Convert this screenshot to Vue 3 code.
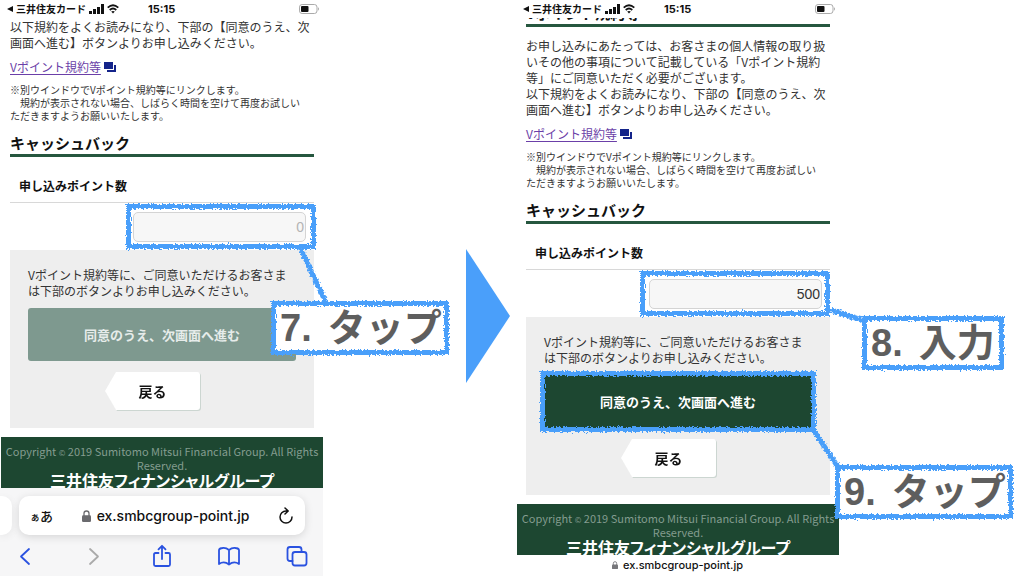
<script setup>
import { ref } from 'vue'

const screens = ref([
  { id: 'before', scrolled: false, points: '', ready: false, toolbar: true },
  { id: 'after', scrolled: true, points: '500', ready: true, toolbar: false }
])
</script>

<template>
  <main class="board">
    <svg class="defs" aria-hidden="true">
      <filter id="crayon" x="-5%" y="-15%" width="110%" height="130%">
        <feTurbulence type="fractalNoise" baseFrequency="0.55" numOctaves="2" seed="4" result="noise" />
        <feDisplacementMap in="SourceGraphic" in2="noise" scale="5" xChannelSelector="R" yChannelSelector="G" />
      </filter>
    </svg>

    <template v-for="(screen, index) in screens" :key="screen.id">
      <svg v-if="index > 0" class="next" viewBox="0 0 44 134" aria-hidden="true">
        <path d="M0 0L44 67L0 134Z" fill="#4a9ffa" />
      </svg>

      <section class="phone">
        <header class="status">
          <svg class="caret" viewBox="0 0 6 8"><path d="M6 1V7L0 4Z" fill="#111" /></svg>
          <span class="carrier">三井住友カード</span>
          <svg class="signal" viewBox="0 0 15 10">
            <path d="M0 7h3v3H0zM4 5h3v5H4zM8 3h3v7H8zM12 0h3v10h-3z" fill="#111" />
          </svg>
          <svg class="wifi" viewBox="0 0 12 10" fill="none" stroke="#111">
            <path d="M.7 3.7Q6-1.2 11.3 3.7M2.7 6Q6 3 9.3 6" stroke-width="1.7" />
            <path d="M4.2 7.6Q6 6.2 7.8 7.6L6 9.6Z" fill="#111" stroke="none" />
          </svg>
          <span class="clock">15:15</span>
          <svg class="battery" viewBox="0 0 21 10">
            <rect x=".5" y=".5" width="17.5" height="9" rx="2.6" fill="#fff" stroke="#aaa" />
            <rect x="2" y="2" width="7.5" height="6" rx="1" fill="#111" />
            <path d="M19 3.3Q21 5 19 6.7Z" fill="#aaa" />
          </svg>
        </header>

        <div class="page">
          <template v-if="screen.scrolled">
            <h2 class="heading tucked">Vポイント規約等</h2>
            <p class="text intro">
              お申し込みにあたっては、お客さまの個人情報の取り扱<br />いその他の事項について記載している「Vポイント規約<br />等」にご同意いただく必要がございます。
            </p>
          </template>
          <p class="text">
            以下規約をよくお読みになり、下部の【同意のうえ、次<br />画面へ進む】ボタンよりお申し込みください。
          </p>
          <p class="terms">
            <a href="#terms">Vポイント規約等</a>
            <svg viewBox="0 0 12 10"><path d="M0 0h9v7H0zM10 3h2v7H3V8h7z" fill="#14248a" /></svg>
          </p>
          <p class="notes">
            ※別ウインドウでVポイント規約等にリンクします。<br />　規約が表示されない場合、しばらく時間を空けて再度お試しい<br />ただきますようお願いいたします。
          </p>
          <h2 class="heading">キャッシュバック</h2>
          <label class="field-name" :for="'points-' + screen.id">申し込みポイント数</label>
          <div class="target field">
            <input :id="'points-' + screen.id" v-model="screen.points" type="text" inputmode="numeric" placeholder="0" />
            <template v-if="!screen.ready">
              <span class="frame"></span>
              <svg class="link link-tap" viewBox="0 0 40 64" aria-hidden="true"><path d="M7 4L33 60" /></svg>
              <strong class="callout callout-tap"><span>7.</span><span>タップ</span></strong>
            </template>
            <template v-else>
              <span class="frame frame-entered"></span>
              <svg class="link link-enter" viewBox="0 0 48 24" aria-hidden="true"><path d="M4 5L44 18" /></svg>
              <strong class="callout callout-enter"><span>8.</span><span>入力</span></strong>
            </template>
          </div>

          <div class="panel">
            <p class="text">
              Vポイント規約等に、ご同意いただけるお客さま<br />は下部のボタンよりお申し込みください。
            </p>
            <div class="target">
              <button class="agree" type="button" :disabled="!screen.ready">同意のうえ、次画面へ進む</button>
              <template v-if="screen.ready">
                <span class="frame frame-button"></span>
                <svg class="link link-agree" viewBox="0 0 36 48" aria-hidden="true"><path d="M6 6L30 42" /></svg>
                <strong class="callout callout-agree"><span>9.</span><span>タップ</span></strong>
              </template>
            </div>
            <button class="back" type="button"><span>戻る</span></button>
          </div>
        </div>

        <footer class="copyright">
          <small>Copyright <i>©</i> 2019 Sumitomo Mitsui Financial Group. All Rights<br />Reserved.</small>
          <b>三井住友フィナンシャルグループ</b>
        </footer>

        <div v-if="screen.toolbar" class="browser">
          <div class="tabs">
            <span class="stub"></span>
            <div class="address">
              <button class="reader" type="button"><small>ぁ</small>あ</button>
              <span class="url">
                <svg viewBox="0 0 9 12"><path d="M2 6V3.5a2.5 2.5 0 0 1 5 0V6" fill="none" stroke="#6a6a6e" stroke-width="1.3" /><rect y="5.2" width="9" height="6.8" rx="1.3" fill="#6a6a6e" /></svg>
                ex.smbcgroup-point.jp
              </span>
              <button class="reload" type="button" aria-label="再読み込み">
                <svg viewBox="0 0 16 18" fill="none" stroke="#111" stroke-width="1.5" stroke-linecap="round" stroke-linejoin="round">
                  <path d="M9.5 4H8a6 6 0 1 0 6 6M7 1L10.2 4L7 7" />
                </svg>
              </button>
            </div>
          </div>
          <nav class="tools">
            <button type="button" aria-label="戻る"><svg viewBox="0 0 22 24"><path d="M14 5L6 12.5L14 20" /></svg></button>
            <button type="button" aria-label="進む" disabled><svg viewBox="0 0 22 24"><path d="M7 5L15 12.5L7 20" /></svg></button>
            <button type="button" aria-label="共有"><svg viewBox="0 0 22 24"><path d="M7.5 9H4.5Q3 9 3 10.5V20.5Q3 22 4.5 22H17.5Q19 22 19 20.5V10.5Q19 9 17.5 9H14.5M11 15V2M7.5 5.3L11 1.8L14.5 5.3" /></svg></button>
            <button type="button" aria-label="ブックマーク"><svg viewBox="0 0 22 24"><path d="M11 6Q8 3.5 4.5 4Q1.5 4.3 1 6V20Q6 16.5 11 20.5Q16 16.5 21 20V6Q20.5 4.3 17.5 4Q14 3.5 11 6V20.5" /></svg></button>
            <button type="button" aria-label="タブ"><svg viewBox="0 0 22 24"><rect x="6.5" y="8" width="14" height="13.5" rx="2.5" /><path d="M6.5 17H4Q1.5 17 1.5 14.5V5.5Q1.5 3 4 3H13Q15.5 3 15.5 5.5V8" /></svg></button>
          </nav>
        </div>
        <p v-else class="mini-url">
          <svg viewBox="0 0 9 12"><path d="M2 6V3.5a2.5 2.5 0 0 1 5 0V6" fill="none" stroke="#77777b" stroke-width="1.3" /><rect y="5.2" width="9" height="6.8" rx="1.3" fill="#77777b" /></svg>
          ex.smbcgroup-point.jp
        </p>
      </section>
    </template>
  </main>
</template>

<style>
body {
  margin: 0;
  background: #fff;
}
</style>

<style scoped>
.board {
  display: grid;
  grid-template-columns: 323fr 193fr 323fr 185fr;
  align-items: start;
  min-height: 100vh;
  overflow: hidden;
  color: #333;
  font-family: "Noto Sans CJK JP", sans-serif;
}
.defs {
  position: absolute;
  width: 0;
  height: 0;
}
p,
h2 {
  margin: 0;
}
button {
  padding: 0;
  border: 0;
  background: none;
  color: inherit;
  font-family: inherit;
}
svg {
  display: block;
  flex: none;
}
.next {
  width: 44px;
  height: 134px;
  justify-self: end;
  margin: 249px 6px 0 0;
}
.phone {
  display: flex;
  flex-direction: column;
  min-width: 0;
}

/* status bar */
.status {
  position: relative;
  z-index: 2;
  display: grid;
  grid-template-columns: 6px auto 15px 12px 1fr 21px;
  align-items: center;
  column-gap: 3px;
  height: 18px;
  padding: 0 3px 0 7px;
  background: #fff;
  color: #111;
  font-size: 10px;
  font-weight: 700;
  line-height: 18px;
  white-space: nowrap;
}
.caret { width: 6px; height: 8px; }
.signal { width: 15px; height: 10px; }
.wifi { width: 12px; height: 10px; }
.clock {
  padding-left: 26px;
  font-family: Inter, sans-serif;
  font-size: 11px;
}
.battery { width: 21px; height: 10px; }

/* page */
.page {
  padding: 1px 9px 9px 10px;
}
.text {
  font-size: 12px;
  line-height: 16px;
  white-space: nowrap;
}
.terms {
  display: flex;
  align-items: center;
  gap: 3px;
  margin-top: 8px;
  font-size: 12px;
  line-height: 16px;
}
.terms a {
  color: #6b3fa8;
  text-decoration: underline;
  text-underline-offset: 2px;
}
.terms svg { width: 12px; height: 10px; }
.notes {
  margin-top: 8px;
  font-size: 10px;
  line-height: 13px;
  white-space: nowrap;
}
.heading {
  margin-top: 11px;
  padding-bottom: 1px;
  border-bottom: 3px solid #26573f;
  color: #111;
  font-size: 15px;
  font-weight: 700;
  line-height: 20px;
}
.tucked {
  margin-top: -16px;
}
.intro {
  margin-top: 11px;
}
.field-name {
  display: block;
  padding: 21px 9px 8px;
  border-bottom: 1px solid #d8d8d8;
  color: #111;
  font-size: 12px;
  font-weight: 700;
  line-height: 16px;
}
.target {
  position: relative;
}
.field {
  width: 57%;
  margin: 9px 8px 8px auto;
}
.field input {
  display: block;
  box-sizing: border-box;
  width: 100%;
  height: 30px;
  padding: 0 1px;
  border: 1px solid #d4d4d4;
  border-radius: 5px;
  background: #f7f7f7;
  color: #333;
  font-family: "Liberation Sans", sans-serif;
  font-size: 14px;
  text-align: right;
}
.field input::placeholder {
  color: #b4b4b4;
}
.panel {
  padding: 17px 18px 18px;
  background: #eee;
}
.agree {
  display: block;
  width: 100%;
  height: 53px;
  margin-top: 9px;
  border-radius: 3px;
  background: #1d4731;
  color: #fff;
  font-size: 13px;
  font-weight: 700;
}
.agree:disabled {
  background: #7e998f;
  color: #e6ecea;
}
.back {
  display: block;
  width: 95px;
  height: 38px;
  margin: 11px auto 0 77px;
  color: #111;
  font-size: 14px;
  font-weight: 700;
  filter: drop-shadow(1px 1px 0 #ccd6d1);
}
.back span {
  display: block;
  border-radius: 3px;
  background: #fff;
  clip-path: polygon(11px 0, 100% 0, 100% 100%, 11px 100%, 0 50%);
  line-height: 38px;
}
.copyright {
  display: flex;
  flex-direction: column;
  align-items: center;
  padding-top: 8px;
  margin-left: 1px;
  background: #1d4731;
  text-align: center;
  white-space: nowrap;
}
.copyright small {
  color: #839c8f;
  font-size: 11px;
  line-height: 13px;
}
.copyright i {
  font-size: 8px;
  font-style: normal;
}
.copyright b {
  color: #fff;
  font-size: 16px;
  line-height: 16px;
  font-feature-settings: "palt";
}

/* annotations */
.frame {
  position: absolute;
  z-index: 3;
  inset: -8px -10px -7px -7px;
  border: 5px solid #4a9ffa;
  filter: url(#crayon);
  pointer-events: none;
}
.frame-entered {
  inset: -8px -8px -7px -9px;
}
.frame-button {
  inset: -4px;
}
.callout {
  position: absolute;
  z-index: 5;
  box-sizing: border-box;
  display: flex;
  gap: 16px;
  height: 54px;
  padding-left: 9px;
  color: #5e5e5e;
  font-family: "Liberation Sans", "Noto Sans CJK JP", sans-serif;
  font-size: 38px;
  line-height: 54px;
  white-space: nowrap;
}
.callout::before {
  content: "";
  position: absolute;
  z-index: -1;
  inset: 0;
  border: 5px solid #4a9ffa;
  background: #fff;
  filter: url(#crayon);
}
.callout-tap {
  top: 89px;
  left: calc(100% - 35px);
  width: 178px;
}
.callout-enter {
  top: 37px;
  left: calc(100% + 40px);
  width: 142px;
}
.callout-agree {
  top: 90px;
  left: calc(100% + 23px);
  width: 178px;
}
.link {
  position: absolute;
  z-index: 4;
  fill: none;
  stroke: #4a9ffa;
  stroke-width: 5;
  filter: url(#crayon);
  pointer-events: none;
}
.link-tap {
  top: 31px;
  left: calc(100% - 13px);
  width: 40px;
  height: 64px;
}
.link-enter {
  top: 26px;
  left: calc(100% + 5px);
  width: 48px;
  height: 24px;
}
.link-agree {
  top: 50px;
  left: calc(100% - 4px);
  width: 36px;
  height: 48px;
}

/* browser chrome */
.browser {
  height: 88px;
  overflow: hidden;
  background: #f6f6f7;
}
.tabs {
  display: flex;
  gap: 7px;
  padding: 8px 18px 0 0;
}
.stub {
  width: 12px;
  height: 39px;
  border-radius: 0 10px 10px 0;
  background: #fff;
  box-shadow: 0 2px 8px #0001;
}
.address {
  flex: 1;
  display: flex;
  align-items: center;
  justify-content: space-between;
  height: 39px;
  padding: 0 11px;
  border-radius: 10px;
  background: #fff;
  box-shadow: 0 2px 8px #0002;
  color: #111;
}
.reader {
  font-size: 13px;
  font-weight: 500;
}
.reader small {
  font-size: 10px;
}
.url {
  display: flex;
  align-items: center;
  gap: 6px;
  font-family: Inter, sans-serif;
  font-size: 14px;
  font-weight: 500;
}
.url svg { width: 9px; height: 12px; }
.reload svg { width: 16px; height: 18px; }
.tools {
  display: flex;
  justify-content: space-between;
  padding: 9px 15px 0;
}
.tools svg {
  width: 22px;
  height: 24px;
  fill: none;
  stroke: #2a52e0;
  stroke-width: 1.8;
  stroke-linecap: round;
  stroke-linejoin: round;
}
.tools button:disabled svg {
  stroke: #aaa;
}
.mini-url {
  display: flex;
  align-items: center;
  justify-content: center;
  gap: 5px;
  color: #111;
  font-family: Inter, sans-serif;
  font-size: 11px;
  font-weight: 500;
  line-height: 20px;
}
.mini-url svg { width: 6px; height: 8px; }
</style>
